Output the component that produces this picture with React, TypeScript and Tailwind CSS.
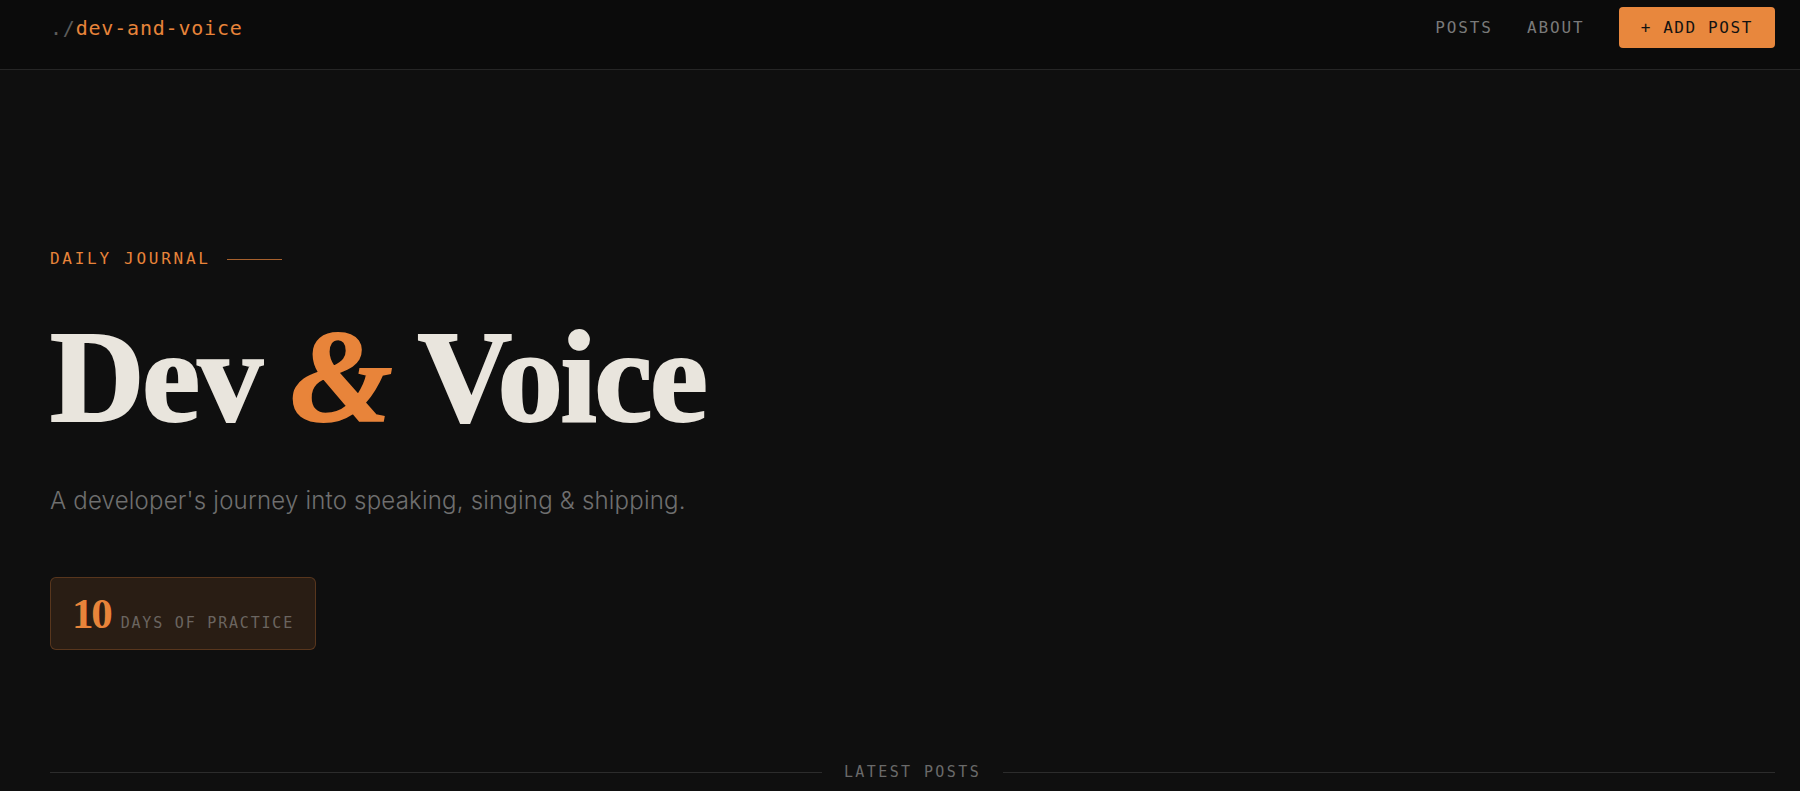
import React from 'react'

const mono = 'font-["DejaVu_Sans_Mono","Liberation_Mono",monospace]'

function Header() {
  return (
    <header className="h-[70px] bg-[#0b0b0b] border-b border-[#262626] pl-[50px] pr-[25px] pt-[7px]">
      <div className="h-[41px] flex items-center justify-between">
        <a className={`${mono} text-[20px] tracking-[0.04em] text-[#e8843a]`}>
          <span className="text-[#5c5c5c]">./</span>dev-and-voice
        </a>
        <nav className={`${mono} flex items-center gap-[34px] text-[16px] tracking-[0.12em] text-[#7a7a7a]`}>
          <a>POSTS</a>
          <a>ABOUT</a>
          <button className="h-[41px] px-[22px] rounded-[4px] bg-[#e8873d] text-[#121212] tracking-[0.1em]">
            + ADD POST
          </button>
        </nav>
      </div>
    </header>
  )
}

export default function App() {
  return (
    <div className="min-h-screen bg-[#0f0f0f] overflow-hidden">
      <Header />
      <main className="pl-[50px] pr-[25px]">
        {/* Hero */}
        <section className="pt-[177px]">
          <div className="flex items-center gap-4">
            <span className={`${mono} text-[16px] leading-6 tracking-[0.17em] text-[#e8843a]`}>DAILY JOURNAL</span>
            <span className="w-[55px] h-px bg-[#e8843a]/70" />
          </div>

          <h1 className='mt-[40px] font-["Liberation_Serif","Times_New_Roman",serif] font-bold text-[131px] leading-none tracking-[-0.02em] text-[#e9e5dd] [-webkit-text-stroke:2px_currentColor]'>
            Dev <span className="italic text-[#e8843a]">&amp;</span> Voice
          </h1>

          <p className='mt-[43px] font-["Inter",sans-serif] font-light text-[24px] leading-8 tracking-[0.2px] text-[#6f6f6f]'>
            A developer's journey into speaking, singing &amp; shipping.
          </p>

          <div className="mt-[60px] inline-flex items-baseline gap-[10px] px-[21px] py-[14px] rounded-[6px] border border-[#e8843a]/25 bg-[#e8843a]/[0.12]">
            <span className='font-["Liberation_Serif",serif] font-bold text-[43px] leading-none tracking-[-0.05em] text-[#e8843a]'>10</span>
            <span className={`${mono} text-[15px] tracking-[0.12em] text-[#6b6560]`}>DAYS OF PRACTICE</span>
          </div>
        </section>

        {/* Latest posts divider */}
        <div className="mt-[112px] flex items-center gap-[22px]">
          <span className="flex-1 h-px bg-[#2c2c2c]" />
          <span className={`${mono} text-[15px] leading-5 tracking-[0.16em] text-[#6a6a6a]`}>LATEST POSTS</span>
          <span className="flex-1 h-px bg-[#2c2c2c]" />
        </div>
      </main>
    </div>
  )
}
